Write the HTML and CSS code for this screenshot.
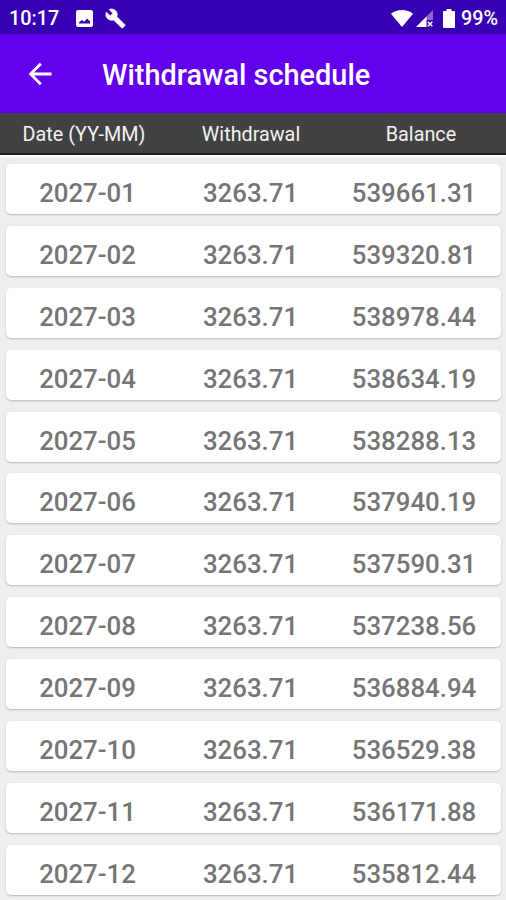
FILE: index.html
```html
<!DOCTYPE html>
<html lang="en">
<head>
    <meta charset="UTF-8">
    <meta name="viewport" content="width=device-width, initial-scale=1.0">
    <title>Withdrawal schedule</title>
    <link rel="stylesheet" href="styles.css">
</head>
<body>
    <div class="status-bar">
        <span class="time">10:17</span>
        <svg class="icon-image" width="17" height="17" viewBox="0 0 17 17">
            <path fill="#fff" fill-rule="evenodd" d="M2 0h13a2 2 0 0 1 2 2v13a2 2 0 0 1-2 2H2a2 2 0 0 1-2-2V2a2 2 0 0 1 2-2zM3 13.5h11v-2l-3-3-2.700 3.200-2.400-1.700L3 12.500z"/>
        </svg>
        <svg class="icon-wrench" width="21" height="21" viewBox="0 0 24 24">
            <path fill="#fff" stroke="#fff" stroke-width="0.800" d="M22.7 19l-9.1-9.1c.9-2.3.4-5-1.500-6.900-2-2-5-2.400-7.400-1.300L9 6 6 9 1.600 4.700C.4 7.100.9 10.100 2.900 12.100c1.900 1.900 4.600 2.400 6.900 1.500l9.100 9.100c.4.4 1 .4 1.400 0l2.300-2.300c.5-.4.5-1.100.1-1.400z"/>
        </svg>
        <div class="status-right">
            <svg width="22" height="17" viewBox="0 0 22 17">
                <path fill="#fff" d="M11 17L0 3.800C6-1.200 16-1.200 22 3.800z"/>
            </svg>
            <svg class="icon-signal" width="17" height="17" viewBox="0 0 17 17">
                <path fill="#fff" fill-opacity="0.4" d="M17 0v10h-7V7z"/>
                <path fill="#fff" d="M0 17L10.500 6.500V17z"/>
                <path stroke="#fff" stroke-width="1.500" d="M11.800 11.800l4.500 4.500M16.300 11.800l-4.500 4.500"/>
            </svg>
            <svg class="icon-battery" width="12" height="19" viewBox="0 0 12 19">
                <path fill="#fff" d="M3.500 0h5v2H11a1 1 0 0 1 1 1v15a1 1 0 0 1-1 1H1a1 1 0 0 1-1-1V3a1 1 0 0 1 1-1h2.500z"/>
            </svg>
            <span class="battery-level">99%</span>
        </div>
    </div>

    <header class="app-bar">
        <svg width="24" height="24" viewBox="0 0 24 24">
            <path fill="none" stroke="#fff" stroke-width="2.800" d="M23.500 12H3M12.800 1.800L2.600 12l10.200 10.200"/>
        </svg>
        <h1>Withdrawal schedule</h1>
    </header>

    <div class="table-head">
        <span>Date (YY-MM)</span>
        <span>Withdrawal</span>
        <span>Balance</span>
    </div>

    <main class="list">
        <div class="row"><span>2027-01</span><span>3263.71</span><span>539661.31</span></div>
        <div class="row"><span>2027-02</span><span>3263.71</span><span>539320.81</span></div>
        <div class="row"><span>2027-03</span><span>3263.71</span><span>538978.44</span></div>
        <div class="row"><span>2027-04</span><span>3263.71</span><span>538634.19</span></div>
        <div class="row"><span>2027-05</span><span>3263.71</span><span>538288.13</span></div>
        <div class="row"><span>2027-06</span><span>3263.71</span><span>537940.19</span></div>
        <div class="row"><span>2027-07</span><span>3263.71</span><span>537590.31</span></div>
        <div class="row"><span>2027-08</span><span>3263.71</span><span>537238.56</span></div>
        <div class="row"><span>2027-09</span><span>3263.71</span><span>536884.94</span></div>
        <div class="row"><span>2027-10</span><span>3263.71</span><span>536529.38</span></div>
        <div class="row"><span>2027-11</span><span>3263.71</span><span>536171.88</span></div>
        <div class="row"><span>2027-12</span><span>3263.71</span><span>535812.44</span></div>
    </main>
</body>
</html>
```
FILE: styles.css
```css
* {
    margin: 0;
    padding: 0;
    box-sizing: border-box;
}

body {
    height: 900px;
    overflow: hidden;
    background: #eeeeee;
    font-family: Roboto, sans-serif;
}

svg {
    display: block;
    flex-shrink: 0;
}

.status-bar {
    display: flex;
    align-items: center;
    height: 34px;
    padding: 2px 8px 0 9px;
    background: #3700b3;
    color: #fff;
    font-size: 19.8px;
    font-weight: 500;
}

.time {
    width: 67px;
}

.icon-wrench {
    margin-left: 12px;
}

.status-right {
    display: flex;
    align-items: center;
    margin-left: auto;
}

.icon-signal {
    margin-left: 3px;
}

.icon-battery {
    margin: 0 6px 0 10px;
}

.app-bar {
    display: flex;
    align-items: center;
    height: 79px;
    padding-left: 28px;
    background: #6200ee;
    color: #fff;
}

.app-bar h1 {
    margin-left: 50px;
    padding-top: 2px;
    font-size: 28.9px;
    font-weight: 500;
}

.table-head {
    display: grid;
    grid-template-columns: 168px 166px 174px;
    align-items: center;
    height: 42px;
    padding-top: 3px;
    border-bottom: 2px solid #1c1c1c;
    background: #424242;
    color: #f2f2f2;
    font-size: 19.8px;
    text-align: center;
}

.list {
    display: flex;
    flex-direction: column;
    gap: 11.9px;
    padding: 7px 5px 0 6px;
    border-top: 2px solid #fff;
}

.row {
    display: grid;
    grid-template-columns: 163px 163px 164px;
    flex-shrink: 0;
    height: 50px;
    border-radius: 5px;
    background: #fff;
    box-shadow: 0 1px 2px rgba(0, 0, 0, 0.22);
    color: #757575;
    font-size: 25.8px;
    font-weight: 500;
    line-height: 58px;
    text-align: center;
}
```
